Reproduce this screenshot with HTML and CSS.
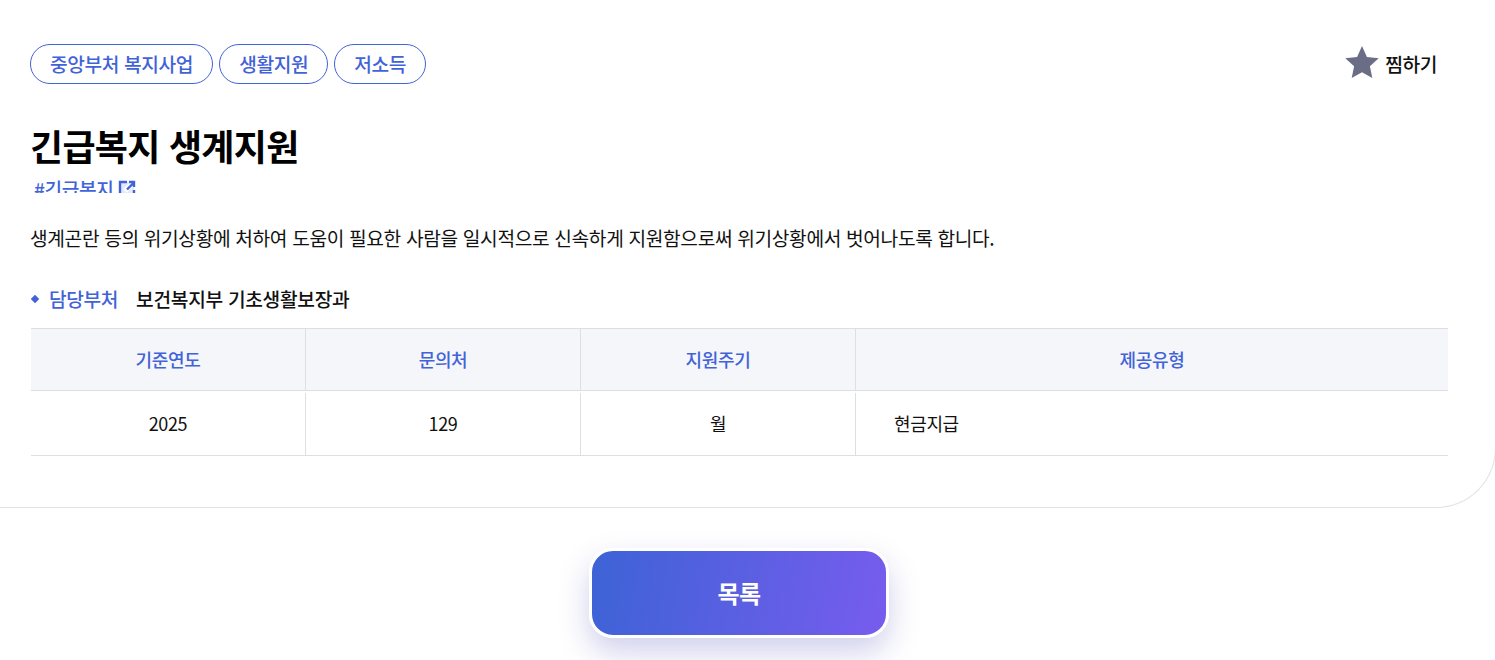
FILE: index.html
```html
<!DOCTYPE html>
<html lang="ko">
<head>
    <meta charset="UTF-8">
    <title>긴급복지 생계지원</title>
    <link rel="stylesheet" href="styles.css">
</head>
<body>
    <section class="detail-card">
        <div class="top-row">
            <div class="tags">
                <a class="tag">중앙부처 복지사업</a>
                <a class="tag">생활지원</a>
                <a class="tag">저소득</a>
            </div>
            <button class="fav-btn">
                <svg class="star" width="36" height="36" viewBox="0 0 36 36"><path d="M18 2l4.900 11 11.800 1.300-8.800 8 2.400 11.700L18 28.200 7.700 34l2.400-11.700-8.800-8L13.100 13z"/></svg>
                <span>찜하기</span>
            </button>
        </div>
        <h1 class="title">긴급복지 생계지원</h1>
        <div class="hash-wrap">
            <a class="hash">#긴급복지
                <svg width="18" height="18" viewBox="0 0 18 18" fill="none" stroke="#4263d8"><path stroke="none" fill="#e4e9fb" d="M2 2h14v14H2z"/><path stroke-width="2.400" d="M9 2H2v14.500h14V10"/><path stroke="#fff" stroke-width="5" d="M7 11l9-9"/><path stroke-width="2.400" d="M9 9.500L15.500 3M11 2h5v5"/></svg>
            </a>
        </div>
        <p class="desc">생계곤란 등의 위기상황에 처하여 도움이 필요한 사람을 일시적으로 신속하게 지원함으로써 위기상황에서 벗어나도록 합니다.</p>
        <div class="dept">
            <span class="dept-label">담당부처</span>
            <span class="dept-name">보건복지부 기초생활보장과</span>
        </div>
        <table class="info-table">
            <colgroup>
                <col class="col-first"><col class="col-fixed"><col class="col-fixed"><col>
            </colgroup>
            <thead>
                <tr>
                    <th>기준연도</th>
                    <th>문의처</th>
                    <th>지원주기</th>
                    <th>제공유형</th>
                </tr>
            </thead>
            <tbody>
                <tr>
                    <td><span class="cell">2025</span></td>
                    <td><span class="cell">129</span></td>
                    <td><span class="cell">월</span></td>
                    <td><span class="cell left">현금지급</span></td>
                </tr>
            </tbody>
        </table>
    </section>
    <div class="btn-row">
        <a class="list-btn">목록</a>
    </div>
</body>
</html>
```

FILE: styles.css
```css
* {
    box-sizing: border-box;
}

body {
    margin: 0;
    height: 660px;
    overflow: hidden;
    background: #fff;
    font-family: "Noto Sans CJK KR", "Noto Sans", sans-serif;
    color: #111;
}

/* right border sits just outside the window, only the curve shows */
.detail-card {
    height: 508px;
    margin-right: -1px;
    padding: 44px 47px 0 31px;
    border-bottom: 1px solid #e2e2e2;
    border-right: 1px solid #e2e2e2;
    border-bottom-right-radius: 60px;
}

.top-row {
    display: flex;
    justify-content: space-between;
    align-items: center;
    height: 40px;
}

.tags {
    display: flex;
    gap: 6px;
    margin-left: -1px;
}

.tag {
    height: 40px;
    padding: 0 19px;
    border: 1px solid #4263d8;
    border-radius: 20px;
    font-size: 19.2px;
    font-weight: 500;
    line-height: 38px;
    letter-spacing: -0.02em;
    color: #4263d8;
}

.fav-btn {
    display: flex;
    align-items: center;
    gap: 5px;
    height: 40px;
    margin-right: 11px;
    padding: 0;
    border: none;
    background: none;
    font-family: inherit;
    font-size: 19.2px;
    font-weight: 500;
    letter-spacing: -0.02em;
    color: #111;
}

.star {
    margin-bottom: 5px;
    fill: #6b6d87;
}

.title {
    margin: 34px 0 0 -1px;
    font-size: 36px;
    font-weight: 700;
    line-height: 54px;
    letter-spacing: -0.02em;
    color: #000;
}

.hash-wrap {
    height: 17px;
    margin-top: 4px;
    padding-left: 3px;
    overflow: hidden;
}

.hash {
    display: inline-flex;
    align-items: center;
    gap: 4px;
    font-size: 19.2px;
    font-weight: 500;
    line-height: 26px;
    letter-spacing: -0.02em;
    color: #4263d8;
}

.desc {
    margin: 31px 0 0 -1px;
    font-size: 19.2px;
    line-height: 28px;
    letter-spacing: -0.36px;
    color: #111;
}

.dept {
    display: flex;
    align-items: center;
    height: 28px;
    margin-top: 33px;
    font-size: 19.2px;
    font-weight: 500;
    letter-spacing: -0.3px;
}

.dept-label {
    position: relative;
    padding-left: 18px;
    margin-right: 18px;
    color: #4263d8;
    letter-spacing: -0.02em;
}

.dept-label::before {
    content: "";
    position: absolute;
    left: 1px;
    top: 50%;
    width: 6px;
    height: 6px;
    margin-top: -3px;
    background: #4263d8;
    transform: rotate(45deg);
}

.info-table {
    width: 100%;
    margin-top: 15px;
    border-collapse: separate;
    border-spacing: 0;
    table-layout: fixed;
    font-size: 18px;
    letter-spacing: -0.02em;
}

.col-first {
    width: 274px;
}

.col-fixed {
    width: 275px;
}

.info-table th {
    height: 63px;
    padding: 0 0 2px;
    border-top: 1px solid #dfdfe3;
    border-bottom: 1px solid #dfdfe3;
    border-left: 1px solid #dfdfe3;
    background: #f5f6fa;
    font-weight: 500;
    color: #4263d8;
}

.info-table th:first-child {
    border-left: none;
}

.info-table td {
    height: 65px;
    padding: 2px 0 0;
    border-bottom: 1px solid #dfdfe3;
}

.cell {
    display: flex;
    align-items: center;
    justify-content: center;
    height: 62px;
    padding-bottom: 2px;
    border-left: 1px solid #dfdfe3;
    color: #111;
}

td:first-child .cell {
    border-left: none;
}

.cell.left {
    justify-content: flex-start;
    padding-left: 38px;
}

.btn-row {
    display: flex;
    justify-content: center;
    margin-top: 40px;
}

.list-btn {
    display: flex;
    align-items: center;
    justify-content: center;
    width: 300px;
    height: 90px;
    margin-left: -17px;
    padding-bottom: 2px;
    border: 3px solid #fff;
    border-radius: 24px;
    background: linear-gradient(100deg, #3d63d6, #775cee);
    box-shadow: 0 14px 30px rgba(80, 80, 190, 0.27);
    font-size: 24px;
    font-weight: 700;
    letter-spacing: -0.5px;
    color: #fff;
}
```
